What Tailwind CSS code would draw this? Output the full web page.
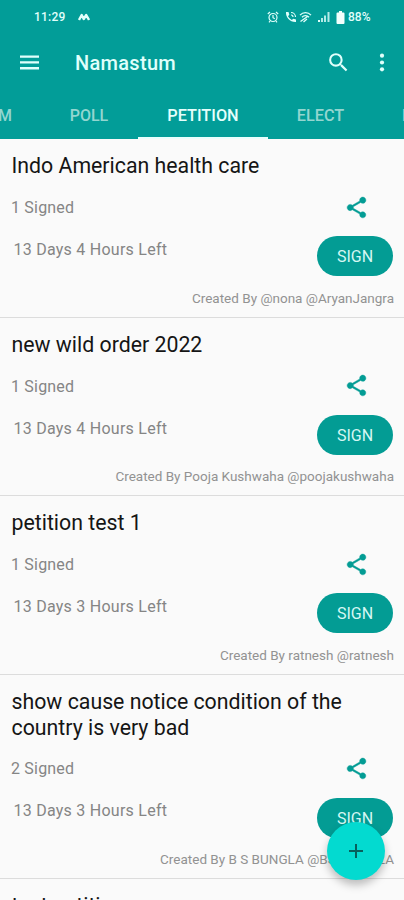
<!DOCTYPE html>
<html lang="en">
<head>
<meta charset="utf-8">
<title>Namastum</title>
<script src="https://cdn.jsdelivr.net/npm/@tailwindcss/browser@4"></script>
</head>
<body class="h-[900px] w-[404px] overflow-hidden bg-[#fafafa] font-['Roboto',sans-serif]">
<svg class="hidden">
  <symbol id="share" viewBox="0 0 24 24"><path d="M18 16.08c-.76 0-1.44.3-1.96.77L8.91 12.7c.05-.23.09-.46.09-.7s-.04-.47-.09-.7l7.05-4.11c.54.5 1.25.81 2.04.81 1.66 0 3-1.34 3-3s-1.34-3-3-3-3 1.34-3 3c0 .24.04.47.09.7L8.04 9.81C7.5 9.31 6.79 9 6 9c-1.66 0-3 1.34-3 3s1.34 3 3 3c.79 0 1.5-.31 2.04-.81l7.12 4.16c-.05.21-.08.43-.08.65 0 1.61 1.31 2.92 2.92 2.92s2.92-1.31 2.92-2.92-1.31-2.92-2.92-2.92z"/></symbol>
</svg>
<div class="relative h-[900px] w-[404px] overflow-hidden">
  <header class="flex h-[139px] flex-col bg-[#029d98] text-[#e0fffb]">
    <div class="flex h-[34px] items-center pl-[34px] pr-[31px] text-[12px] font-medium">
      <span class="tracking-[0.2px]">11:29</span>
      <svg class="ml-[13px] h-[8px] w-[12px]" viewBox="0 0 12 8" fill="none" stroke="currentColor" stroke-width="2.4" stroke-linejoin="round"><path d="M1 7 3.7 2 5.7 6 8.2 2 11 7"/></svg>
      <div class="ml-auto flex items-center">
        <svg class="h-[12px] w-[12px]" viewBox="0 0 12 12" fill="none" stroke="currentColor" stroke-width="1.2"><circle cx="6" cy="6.5" r="4"/><path d="M6 4v2.7l1.8 1M.8 3 3 1M11.200 3 9 1M3 10 2 11.300M9 10l1 1.300"/></svg>
        <svg class="ml-[6px] h-[12px] w-[12px]" viewBox="0 0 12 12"><path fill="currentColor" d="M1 1h2.500l.8 2.800L3 5.200a8 8 0 0 0 3.800 3.700l1.500-1.200 2.700.8V11C5.500 11.500.5 6.500 1 1z"/><path d="M6 1.500a4.500 4.500 0 0 1 4.500 4.500M6 4a2 2 0 0 1 2 2" fill="none" stroke="currentColor" stroke-width="1.200"/></svg>
        <svg class="ml-[2px] h-[12px] w-[13px]" viewBox="0 0 13 12" fill="none" stroke="currentColor" stroke-width="1.300"><path d="M1 4.200C4 .7 9 .7 12 4.200M3 6.200c2-2.200 5-2.200 7 0M1.500 10.500 8.500 5.500M4.500 11 8 8"/></svg>
        <svg class="ml-[6px] h-[12px] w-[12px]" viewBox="0 0 12 12" fill="currentColor"><path d="M0 9h2v2H0z"/><path opacity=".8" d="M3 7h2v4H3zM6 4.500h2V11H6zM9.500 1h2v10h-2z"/></svg>
        <svg class="ml-[6px] h-[13px] w-[9px]" viewBox="0 0 9 13" fill="#f2fffd"><path d="M3 0h3v1.500h1.500q1 0 1 1V12q0 1-1 1h-6q-1 0-1-1V2.500q0-1 1-1H3z"/></svg>
        <span class="ml-[3px] w-[25px] whitespace-nowrap text-[12px]">88%</span>
      </div>
    </div>
    <div class="flex h-[57px] items-center pl-[20px] pr-[19px]">
      <svg class="h-[15px] w-[19px]" viewBox="0 0 19 15" fill="currentColor"><path d="M0 .5h19v2.300H0zM0 6.300h19v2.300H0zM0 12.100h19v2.300H0z"/></svg>
      <h1 class="ml-[36px] text-[20px] font-medium tracking-[0.3px]">Namastum</h1>
      <svg class="ml-auto h-[25px] w-[25px]" viewBox="0 0 24 24" fill="currentColor"><path d="M15.500 14h-.79l-.28-.27A6.471 6.471 0 0 0 16 9.500 6.500 6.500 0 1 0 9.500 16c1.610 0 3.090-.59 4.230-1.570l.27.28v.79l5 4.990L20.490 19l-4.990-5zm-6 0C7.010 14 5 11.990 5 9.500S7.010 5 9.500 5 14 7.010 14 9.500 11.990 14 9.500 14z"/></svg>
      <svg class="ml-[28px] h-[19px] w-[6px]" viewBox="0 0 6 19" fill="currentColor"><circle cx="3" cy="2.700" r="2.100"/><circle cx="3" cy="9.500" r="2.100"/><circle cx="3" cy="16.300" r="2.100"/></svg>
    </div>
    <nav class="flex flex-1 text-[16px] font-medium text-[#93d6d0]">
      <div class="flex w-[40px] items-center overflow-hidden pt-[2px]"><span class="-ml-[2px]">M</span></div>
      <div class="flex w-[98px] items-center justify-center pt-[2px]">POLL</div>
      <div class="flex w-[130px] items-center justify-center border-b-2 border-[#e8fffd] pt-[4px] text-[16.300px] text-[#e5fffc]">PETITION</div>
      <div class="flex w-[105px] items-center justify-center pt-[2px] text-[16.300px]">ELECT</div>
      <div class="flex flex-1 items-center justify-end overflow-hidden pt-[2px]"><span class="-mr-[7px]">E</span></div>
    </nav>
  </header>
  <main id="list"></main>
  <button class="absolute left-[326.500px] top-[822px] flex h-[58px] w-[58px] items-center justify-center rounded-full bg-[#03dad0] shadow-[0_5px_8px_rgba(0,0,0,0.25)]" aria-label="Add">
    <svg class="h-[14px] w-[14px]" viewBox="0 0 14 14" stroke="#07605d" stroke-width="2"><path d="M7 0v14M0 7h14"/></svg>
  </button>
</div>
<template id="card">
  <article class="border-b border-[#dcdcdc] pt-[14px]">
    <h2 class="w-[360px] pl-[11.500px] text-[21.300px] leading-[25.500px] text-[#151515]"></h2>
    <div class="flex h-[138.200px] justify-between pl-[11px] pr-[11px] text-[16px] text-[#858585]">
      <div class="flex flex-col pt-[19.400px]">
        <p class="signed leading-[20px] tracking-[0.2px]"></p>
        <p class="left mt-[22px] pl-[2.500px] leading-[20px] tracking-[0.25px]"></p>
      </div>
      <div class="flex flex-col items-end pt-[16px]">
        <svg class="mr-[24.500px] h-[25px] w-[25px] fill-[#039c94] stroke-[#039c94] stroke-[0.4]"><use href="#share"/></svg>
        <div class="mt-[16.500px] flex h-[40px] w-[76px] items-center justify-center rounded-full bg-[#039c94] pt-[2px] text-[16px] text-[#d5f7f3]">SIGN</div>
        <p class="by -mr-[1px] -ml-[200px] mt-[12.500px] whitespace-nowrap text-[13.500px] leading-[18px] text-[#929292]"></p>
      </div>
    </div>
  </article>
</template>
<script>
const rows = [
  ["Indo American health care", "1 Signed", "13 Days 4 Hours Left", "Created By @nona @AryanJangra"],
  ["new wild order 2022", "1 Signed", "13 Days 4 Hours Left", "Created By Pooja Kushwaha @poojakushwaha"],
  ["petition test 1", "1 Signed", "13 Days 3 Hours Left", "Created By ratnesh @ratnesh"],
  ["show cause notice condition of the country is very bad", "2 Signed", "13 Days 3 Hours Left", "Created By B S BUNGLA @BS_BUNGLA"],
  ["test petition", "", "", ""]
];
for (const r of rows) {
  const c = document.getElementById("card").content.cloneNode(true);
  ["h2", ".signed", ".left", ".by"].forEach((s, i) => c.querySelector(s).textContent = r[i]);
  document.getElementById("list").append(c);
}
</script>
</body>
</html>
